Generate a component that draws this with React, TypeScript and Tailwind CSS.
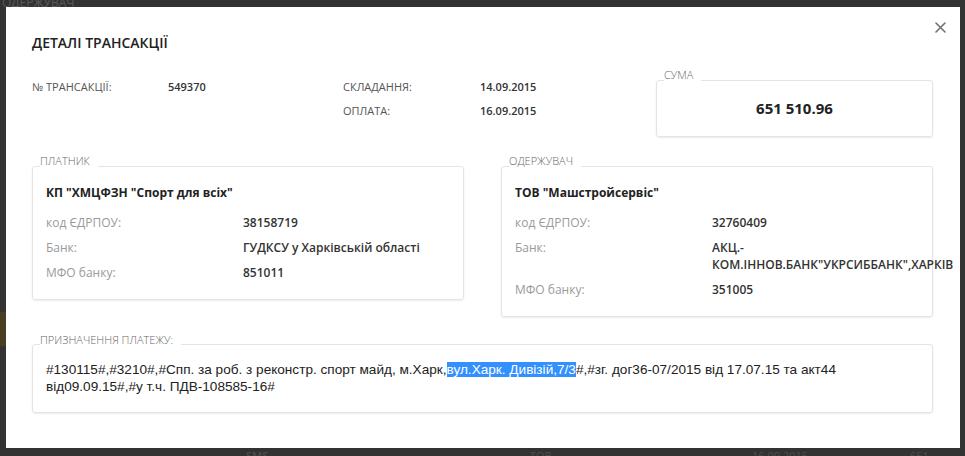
import React from "react";

const OS = { fontFamily: '"Open Sans", "Noto Sans", sans-serif' };

function Field({ label, children }: { label: string; children: React.ReactNode }) {
  return (
    <div className="flex text-[12px] leading-[17px]">
      <div className="w-[197px] shrink-0 text-[#9a9a9a]">{label}</div>
      <div className="font-semibold text-[#333] whitespace-nowrap">{children}</div>
    </div>
  );
}

function Party({
  title,
  name,
  code,
  bank,
  mfo,
}: {
  title: string;
  name: string;
  code: string;
  bank: React.ReactNode;
  mfo: string;
}) {
  return (
    <div className="relative w-[432px] rounded-[3px] border border-[#e4e4e4] shadow-[0_1px_2px_rgba(0,0,0,0.08)] pl-[13px] pt-[16px] pb-[18px]">
      <div className="absolute left-[7px] top-[-13px] bg-white pr-[8px] text-[11px] leading-[14px] font-light text-[#666] uppercase">
        {title}
      </div>
      <div className="text-[12px] leading-[20px] font-bold text-[#222]">{name}</div>
      <div className="mt-[11px] flex flex-col gap-[8px]">
        <Field label="код ЄДРПОУ:">{code}</Field>
        <Field label="Банк:">{bank}</Field>
        <Field label="МФО банку:">{mfo}</Field>
      </div>
    </div>
  );
}

export default function App() {
  return (
    <div className="relative w-[965px] h-[456px] overflow-hidden bg-[#333333]" style={OS}>
      {/* faint page behind overlay */}
      <div className="absolute left-[2px] top-[-6px] text-[12px] text-[#5a5a5a]">ОДЕРЖУВАЧ</div>
      <div className="absolute left-0 top-[312px] w-[6px] h-[34px] bg-[#4a3d22]" />
      <div className="absolute left-[246px] top-[448px] text-[11px] text-[#4e4e4e] font-semibold">SMS</div>
      <div className="absolute left-[530px] top-[448px] text-[11px] text-[#4e4e4e]">ТОВ</div>
      <div className="absolute left-[752px] top-[448px] text-[11px] text-[#4e4e4e]">16.09.2015</div>
      <div className="absolute left-[910px] top-[448px] text-[11px] text-[#4e4e4e]">651 510.96</div>

      {/* modal */}
      <div className="absolute left-[6px] top-[7px] w-[954px] h-[441px] bg-white pl-[26px] pr-[27px] pt-[26px]">
        <button className="absolute right-[14px] top-[15px] w-[11px] h-[11px] text-[#707070]">
          <svg viewBox="0 0 11 11" width="11" height="11" fill="none" stroke="currentColor" strokeWidth="1.6" strokeLinecap="round">
            <path d="M1 1L10 10M10 1L1 10" />
          </svg>
        </button>

        <div className="text-[14px] leading-[20px] font-semibold text-[#222] uppercase">Деталі трансакції</div>

        <div className="mt-[22px] flex items-start justify-between">
          <div className="grid grid-cols-[136px_175px_137px_auto] text-[11px] leading-[24px]">
            <div className="text-[#555]">№ ТРАНСАКЦІЇ:</div>
            <div className="font-semibold text-[#333]">549370</div>
            <div className="text-[#555]">СКЛАДАННЯ:</div>
            <div className="font-semibold text-[#333]">14.09.2015</div>
            <div />
            <div />
            <div className="text-[#555]">ОПЛАТА:</div>
            <div className="font-semibold text-[#333]">16.09.2015</div>
          </div>
          <div className="relative mt-[5px] w-[277px] h-[57px] rounded-[3px] border border-[#e4e4e4] shadow-[0_1px_2px_rgba(0,0,0,0.08)] flex items-center justify-center">
            <div className="absolute left-[7px] top-[-13px] bg-white pr-[8px] text-[11px] leading-[14px] font-light text-[#666]">СУМА</div>
            <div className="text-[15px] font-bold text-[#222]">651 510.96</div>
          </div>
        </div>

        <div className="mt-[29px] flex items-start justify-between">
          <Party
            title="Платник"
            name={'КП "ХМЦФЗН "Спорт для всіх"'}
            code="38158719"
            bank="ГУДКСУ у Харківській області"
            mfo="851011"
          />
          <Party
            title="Одержувач"
            name={'ТОВ "Машстройсервіс"'}
            code="32760409"
            bank={
              <>
                АКЦ.-
                <br />
                КОМ.ІННОВ.БАНК"УКРСИББАНК",ХАРКІВ
              </>
            }
            mfo="351005"
          />
        </div>

        <div className="relative mt-[27px] rounded-[3px] border border-[#e4e4e4] shadow-[0_1px_2px_rgba(0,0,0,0.08)] pl-[13px] pt-[16px] pb-[17px]">
          <div className="absolute left-[7px] top-[-12px] bg-white pr-[8px] text-[11px] leading-[14px] font-light text-[#666]">
            ПРИЗНАЧЕННЯ ПЛАТЕЖУ:
          </div>
          <div
            className="text-[13.6px] leading-[17px] text-[#222]"
            style={{ fontFamily: '"Liberation Sans", Arial, sans-serif' }}
          >
            #130115#,#3210#,#Спп. за роб. з реконстр. спорт майд, м.Харк,
            <span className="bg-[#3390ff] text-white">вул.Харк. Дивізій,7/3</span>
            #,#зг. дог36-07/2015 від 17.07.15 та акт44
            <br />
            від09.09.15#,#у т.ч. ПДВ-108585-16#
          </div>
        </div>
      </div>
    </div>
  );
}
